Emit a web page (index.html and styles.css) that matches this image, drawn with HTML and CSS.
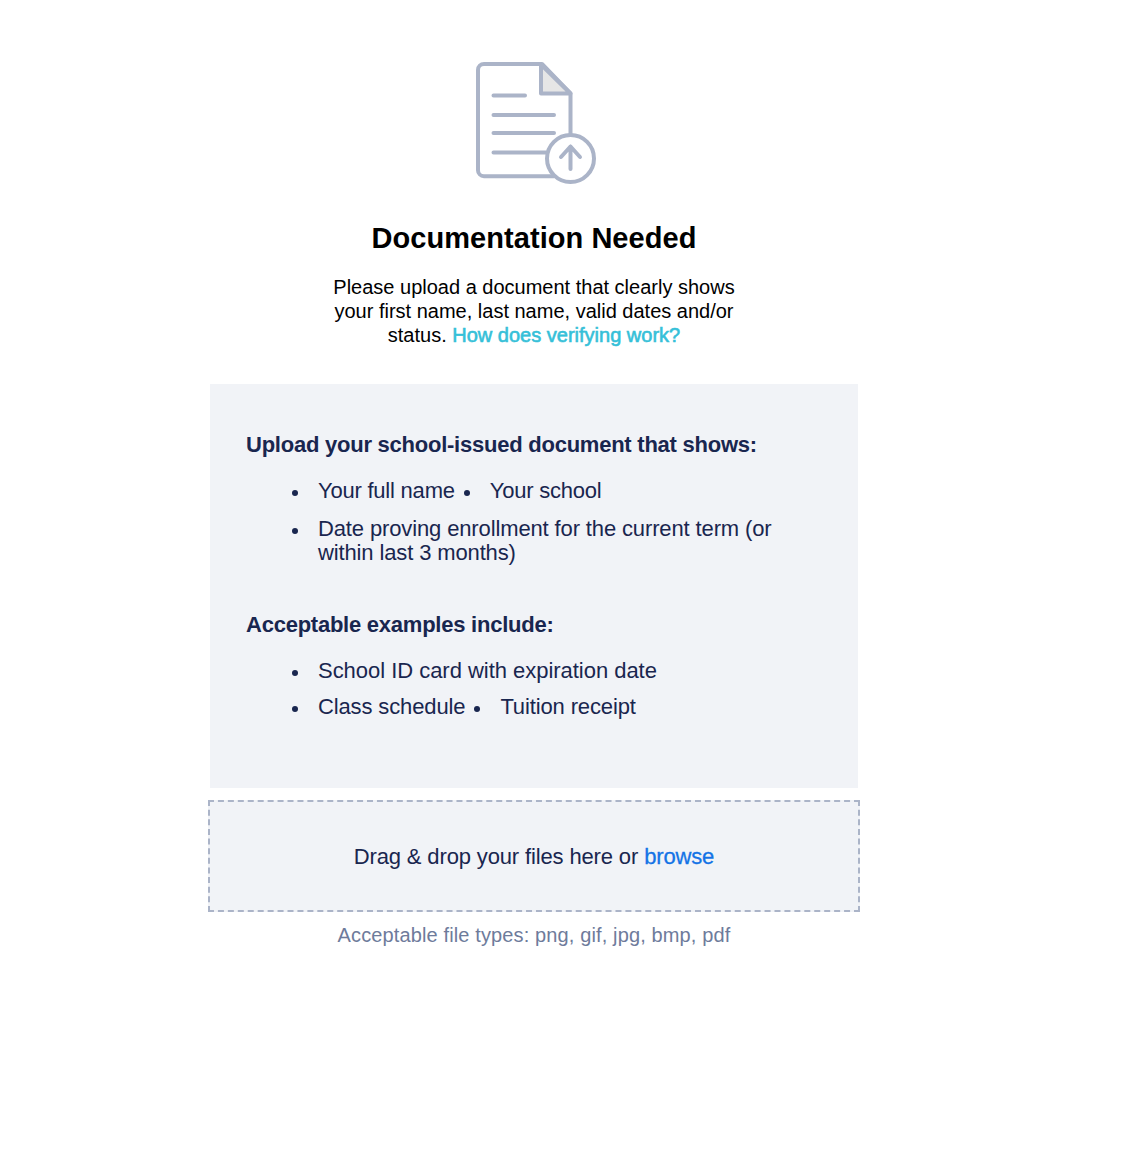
FILE: index.html
```html
<!DOCTYPE html>
<html lang="en">
<head>
<meta charset="utf-8">
<title>Documentation Needed</title>
<link rel="stylesheet" href="styles.css">
</head>
<body>
<main class="upload">
  <svg class="doc-icon" width="120" height="122" viewBox="0 0 120 122" fill="none" stroke="#abb4c8" stroke-width="4" stroke-linecap="round" stroke-linejoin="round" aria-hidden="true">
    <path d="M94.500 73V31.500L66 2H8a6 6 0 0 0-6 6v100.200a6 6 0 0 0 6 6h70"/>
    <path d="M65 2.500v29h29.500z" fill="#e6e6e6"/>
    <path d="M17.500 33.500H49M17.500 53H78M17.500 71H78M17.500 90.500H70"/>
    <circle cx="94.500" cy="96.500" r="23.500" fill="#fff"/>
    <path d="M94.500 107V84.500M85 95l9.500-10.500L104 95"/>
  </svg>
  <h1 class="title">Documentation Needed</h1>
  <p class="intro">Please upload a document that clearly shows<br>your first name, last name, valid dates and/or<br>status. <a class="help">How does verifying work?</a></p>
  <section class="panel">
    <h2 class="heading">Upload your school-issued document that shows:</h2>
    <ul class="list list-first">
      <li class="row row-tight"><span class="item">Your full name</span><span class="item">Your school</span></li>
      <li class="row"><span class="item">Date proving enrollment for the current term (or<br>within last 3 months)</span></li>
    </ul>
    <h2 class="heading heading-second">Acceptable examples include:</h2>
    <ul class="list">
      <li class="row row-wide"><span class="item">School ID card with expiration date</span></li>
      <li class="row"><span class="item">Class schedule</span><span class="item">Tuition receipt</span></li>
    </ul>
  </section>
  <div class="dropzone"><span>Drag &amp; drop your files here or <a class="browse">browse</a></span></div>
  <p class="types">Acceptable file types: png, gif, jpg, bmp, pdf</p>
</main>
</body>
</html>
```

FILE: styles.css
```css
* { box-sizing: border-box; }
body {
  margin: 0;
  min-height: 1152px;
  background: #fff;
  color: #000;
  font-family: "Helvetica Neue", "Liberation Sans", Arial, sans-serif;
}
.upload {
  width: 652px;
  margin-left: 208px;
  padding-top: 62px;
  display: flex;
  flex-direction: column;
  align-items: center;
}
.doc-icon { display: block; margin-left: 4px; }
.title {
  margin: 36px 0 0;
  font-size: 29px;
  line-height: 36px;
  letter-spacing: 0.05px;
  white-space: nowrap;
}
.intro {
  margin: 19px 0 0;
  font-size: 20px;
  line-height: 24px;
  text-align: center;
  white-space: nowrap;
}
.help { color: #35c0d8; -webkit-text-stroke: 0.6px #35c0d8; }
.panel {
  width: 648px;
  height: 404px;
  margin-top: 37px;
  padding: 49px 36px 0;
  background: #f1f3f7;
  color: #19264f;
}
.heading {
  margin: 0;
  font-size: 22px;
  line-height: 24px;
  letter-spacing: -0.24px;
  white-space: nowrap;
}
.heading-second { margin-top: 48px; }
.list {
  list-style: none;
  margin: 22px 0 0;
  padding: 0 0 0 46px;
  font-size: 22px;
  line-height: 24px;
  display: grid;
  row-gap: 12px;
}
.list-first { row-gap: 14px; }
.row { display: flex; gap: 9px; letter-spacing: -0.13px; white-space: nowrap; }
.row-tight { letter-spacing: -0.22px; }
.row-wide { letter-spacing: -0.03px; }
.item { display: flex; gap: 20px; }
.item::before {
  content: "";
  flex: none;
  width: 6px;
  height: 6px;
  margin-top: 11px;
  border-radius: 50%;
  background: #19264f;
}
.dropzone {
  width: 652px;
  height: 112px;
  margin-top: 12px;
  padding-top: 2px;
  border: 2px dashed #abb4c8;
  background: #f1f3f7;
  color: #19264f;
  font-size: 22px;
  letter-spacing: -0.14px;
  display: flex;
  align-items: center;
  justify-content: center;
}
.browse { color: #1473e6; -webkit-text-stroke: 0.3px #1473e6; }
.types {
  margin: 11px 0 0;
  font-size: 20px;
  line-height: 24px;
  letter-spacing: 0.13px;
  color: #6e7b9b;
}
```
